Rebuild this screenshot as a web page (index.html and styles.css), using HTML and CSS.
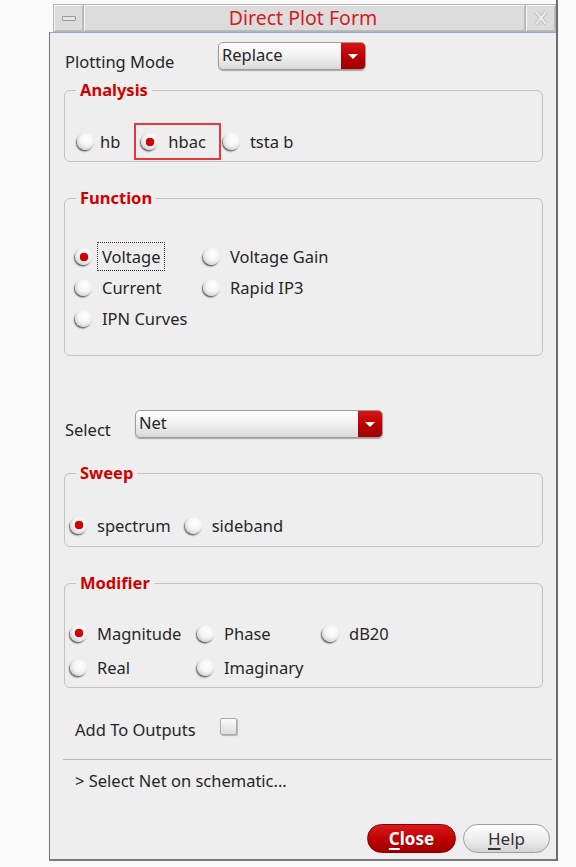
FILE: index.html
```html
<!DOCTYPE html>
<html>
<head>
<meta charset="utf-8">
<title>Direct Plot Form</title>
<link rel="stylesheet" href="styles.css">
</head>
<body>
<div class="window">
  <div class="titlebar">
    <div class="tb-seg tb-btn"><span class="min-icon"></span></div>
    <div class="tb-seg tb-title">Direct Plot Form</div>
    <div class="tb-seg tb-btn">
      <svg class="x-icon" width="14" height="16" viewBox="0 0 14 16">
        <path d="M2 2 L12 14 M12 2 L2 14" stroke="#bdbdbd" stroke-width="4" fill="none"/>
        <path d="M2 2 L12 14 M12 2 L2 14" stroke="#ececec" stroke-width="2" fill="none"/>
      </svg>
    </div>
  </div>

  <div class="panel">
    <div class="field-row mode-row">
      <span class="field-label">Plotting Mode</span>
      <div class="combo combo-mode"><span class="combo-text">Replace</span><span class="combo-arrow"></span></div>
    </div>

    <div class="group g-analysis">
      <div class="legend">Analysis</div>
      <div class="body">
        <div class="opt"><span class="radio tight"></span><span class="txt">hb</span></div>
        <div class="opt opt-hl"><span class="radio on"></span><span class="txt">hbac</span></div>
        <div class="opt opt-after"><span class="radio"></span><span class="txt">tsta b</span></div>
      </div>
    </div>

    <div class="group g-function">
      <div class="legend">Function</div>
      <div class="body">
        <div class="opt"><span class="radio on"></span><span class="txt focus">Voltage</span></div>
        <div class="opt"><span class="radio"></span><span class="txt">Voltage Gain</span></div>
        <div class="opt"><span class="radio"></span><span class="txt">Current</span></div>
        <div class="opt"><span class="radio"></span><span class="txt">Rapid IP3</span></div>
        <div class="opt"><span class="radio"></span><span class="txt">IPN Curves</span></div>
      </div>
    </div>

    <div class="field-row select-row">
      <span class="field-label">Select</span>
      <div class="combo combo-select"><span class="combo-text">Net</span><span class="combo-arrow"></span></div>
    </div>

    <div class="group g-sweep">
      <div class="legend">Sweep</div>
      <div class="body">
        <div class="opt"><span class="radio on"></span><span class="txt">spectrum</span></div>
        <div class="opt"><span class="radio"></span><span class="txt">sideband</span></div>
      </div>
    </div>

    <div class="group g-modifier">
      <div class="legend">Modifier</div>
      <div class="body">
        <div class="opt"><span class="radio on"></span><span class="txt">Magnitude</span></div>
        <div class="opt"><span class="radio"></span><span class="txt">Phase</span></div>
        <div class="opt"><span class="radio"></span><span class="txt">dB20</span></div>
        <div class="opt"><span class="radio"></span><span class="txt">Real</span></div>
        <div class="opt"><span class="radio"></span><span class="txt">Imaginary</span></div>
      </div>
    </div>

    <div class="add-row">
      <span class="add-label">Add To Outputs</span>
      <span class="checkbox"></span>
    </div>

    <div class="sep"></div>

    <div class="status">&gt; Select Net on schematic...</div>

    <div class="buttons">
      <div class="btn btn-close"><u>C</u>lose</div>
      <div class="btn btn-help"><u>H</u>elp</div>
    </div>
  </div>
</div>
</body>
</html>
```

FILE: styles.css
```css
* { box-sizing: border-box; }
html, body { margin: 0; padding: 0; }
body {
  background: #f9f9f9;
  font-family: "Noto Sans", "Open Sans", sans-serif;
  font-size: 16.5px;
  color: #262626;
  height: 867px;
  overflow: hidden;
}

.window {
  margin-left: 49px;
  width: 509px;
  padding-top: 4px;
  border-right: 2px solid #6d6d6d;
}

/* title bar */
.titlebar {
  display: flex;
  height: 28px;
  margin-left: 4px;
  padding: 1px;
  gap: 1px;
  background: #b5b5b5;
}
.tb-seg {
  background: #dcdcdc;
  box-shadow: inset 1px 1px 0 #f4f4f4, inset -1px -1px 0 #bcbcbc;
  display: flex;
  align-items: center;
  justify-content: center;
}
.tb-btn { width: 29px; flex: none; }
.tb-title {
  flex: 1;
  color: #d42020;
  font-size: 19.5px;
  line-height: 26px;
  padding-right: 3px;
}
.min-icon {
  width: 14px;
  height: 5px;
  border: 1px solid #9a9a9a;
  border-radius: 1px;
  background: #e6e6e6;
}

/* main panel */
.panel {
  border-left: 1px solid #767676;
  border-top: 1px solid #8ea7cb;
  border-bottom: 2px solid #7a7a7a;
  background: #eeeeee;
  padding-bottom: 6px;
}

.field-row {
  display: flex;
  align-items: flex-end;
  height: 28px;
  padding-left: 15px;
}
.mode-row { margin-top: 9px; }
.select-row { margin-top: 54px; }
.field-label { line-height: 20px; margin-bottom: -2px; }
.mode-row .field-label { width: 153px; }
.select-row .field-label { width: 70px; }

.combo {
  display: flex;
  height: 28px;
  border: 1px solid #9c9c9c;
  border-radius: 5px;
  background: linear-gradient(#fdfdfd, #f1f1f1 50%, #d9d9d9);
  box-shadow: 0 1px 1px rgba(0, 0, 0, 0.3);
  overflow: hidden;
}
.combo-mode { width: 148px; }
.combo-select { width: 248px; }
.combo-text { flex: 1; padding-left: 3px; line-height: 24px; }
.combo-arrow {
  width: 24px;
  flex: none;
  background: linear-gradient(#da1414, #b40000 60%, #a00000);
  display: flex;
  align-items: center;
  justify-content: center;
}
.combo-arrow::before {
  content: "";
  border-left: 5px solid transparent;
  border-right: 5px solid transparent;
  border-top: 5px solid #fff;
}

/* group boxes */
.group {
  margin: 0 13px 0 14px;
  border: 1px solid #c3c3c3;
  border-radius: 6px;
}
.g-analysis { margin-top: 20px; }
.g-function { margin-top: 36px; }
.g-sweep { margin-top: 35px; }
.g-modifier { margin-top: 36px; }

.legend {
  width: max-content;
  height: 20px;
  margin: -11px 0 0 11px;
  padding: 0 4px;
  background: #eeeeee;
  color: #d00000;
  font-weight: 700;
  line-height: 20px;
}

.opt { display: flex; align-items: center; }
.radio {
  width: 17px;
  height: 17px;
  flex: none;
  margin-right: 5px;
  border-radius: 50%;
  background: radial-gradient(circle at 58% 38%, #ffffff 0%, #f4f4f4 45%, #cfcfcf 78%, #a8a8a8 100%);
  box-shadow: -1px 1.5px 1.5px rgba(0, 0, 0, 0.6);
  display: flex;
  align-items: center;
  justify-content: center;
}
.radio.on::after {
  content: "";
  width: 8px;
  height: 8px;
  border-radius: 50%;
  background: #d60000;
  box-shadow: 0 0 1px #700;
}
.radio.tight { margin-right: 1px; }
.txt {
  border: 1px solid transparent;
  padding: 0 4px;
  line-height: 27px;
  white-space: nowrap;
}
.txt.focus { border: 1px dotted #333; }

.g-analysis .body {
  display: flex;
  align-items: center;
  height: 37px;
  margin: 23px 0 1px;
  padding-left: 12px;
}
.opt-hl {
  height: 37px;
  margin-left: 9px;
  padding: 0 8px 0 5px;
  border: 2px solid #e8383a;
}
.opt-after { margin-left: 2px; }

.g-function .body {
  display: grid;
  grid-template-columns: 128px auto;
  grid-auto-rows: 31px;
  margin: 33px 0 21px;
  padding-left: 10px;
}

.g-sweep .body {
  display: flex;
  align-items: center;
  gap: 9px;
  height: 30px;
  margin: 27px 0 6px;
  padding-left: 5px;
}

.g-modifier .body {
  display: grid;
  grid-template-columns: 127px 125px auto;
  grid-auto-rows: 34px;
  margin: 23px 0 3px;
  padding-left: 5px;
}

/* add to outputs */
.add-row {
  display: flex;
  align-items: flex-start;
  height: 24px;
  margin-top: 30px;
  padding-left: 25px;
}
.add-label { width: 145px; line-height: 24px; }
.checkbox {
  width: 17px;
  height: 17px;
  border: 1px solid #a9a9a9;
  border-radius: 2px;
  background: linear-gradient(#fbfbfb, #dcdcdc);
  box-shadow: 1px 1px 1px rgba(0, 0, 0, 0.25);
}

.sep {
  height: 1px;
  margin: 17px 4px 0 13px;
  background: #b8b8b8;
}

.status {
  margin-top: 11px;
  padding-left: 25px;
  line-height: 20px;
}

/* buttons */
.buttons {
  display: flex;
  justify-content: flex-end;
  gap: 7px;
  margin-top: 33px;
  padding-right: 6px;
}
.btn {
  height: 29px;
  border-radius: 15px;
  display: flex;
  align-items: center;
  justify-content: center;
  font-size: 17px;
}
.btn u { text-decoration-thickness: 2px; text-underline-offset: 3px; }
.btn-close {
  width: 89px;
  background: linear-gradient(#dc1a1a, #bb0000 55%, #a00000);
  border: 1px solid #850000;
  color: #ffffff;
  font-weight: 700;
}
.btn-help {
  width: 87px;
  background: linear-gradient(#ffffff, #ececec 55%, #d4d4d4);
  border: 1px solid #9e9e9e;
  color: #333333;
}
```
